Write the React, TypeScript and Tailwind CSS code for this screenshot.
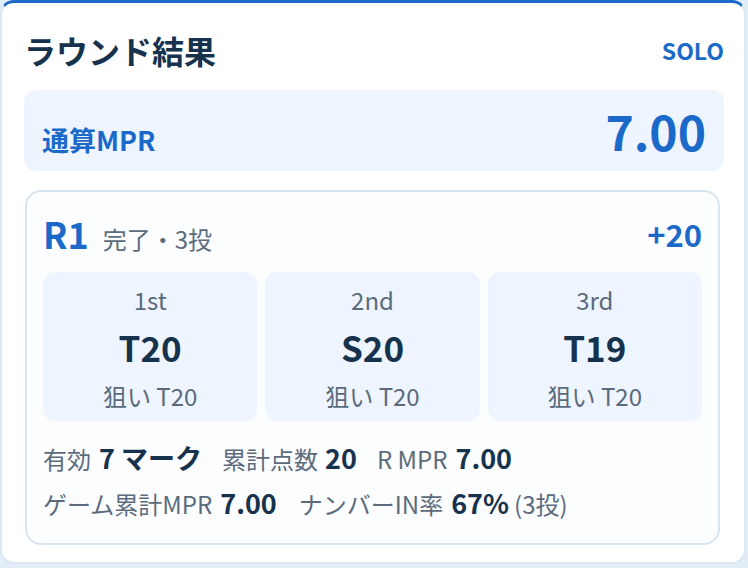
import React from "react";

const throws = [
    { label: "1st", hit: "T20", aim: "狙い T20" },
    { label: "2nd", hit: "S20", aim: "狙い T20" },
    { label: "3rd", hit: "T19", aim: "狙い T20" },
];

const App = () => {
    return (
        <div
            className="w-[748px] h-[568px] bg-[#e3edf7] pr-[2px] pb-[4px]"
            style={{ fontFamily: '"Noto Sans CJK JP", "Noto Sans", sans-serif' }}
        >
            <div className="h-full bg-white rounded-[14px] border-x-2 border-b-2 border-t-[3px] border-x-[#dbe7f3] border-b-[#dbe7f3] border-t-[#1b6ac9] pl-[22px] pr-[20px] pt-[25px]">
                {/* Header */}
                <div className="flex items-center justify-between h-[44px]">
                    <h1 className="text-[32px] font-bold text-[#17324d] leading-none">ラウンド結果</h1>
                    <span className="text-[23px] font-bold text-[#1b6ac9] leading-none">SOLO</span>
                </div>

                {/* Total MPR */}
                <div className="mt-[18px] h-[81px] bg-[#eef5fe] rounded-[12px] flex items-baseline justify-between pl-[18px] pr-[18px] pt-[16px]">
                    <span className="text-[27px] font-bold text-[#1b6ac9] leading-none">通算MPR</span>
                    <span className="text-[48px] font-bold text-[#1b6ac9] leading-none">7.00</span>
                </div>

                {/* Round card */}
                <div className="mt-[19px] ml-[1px] mr-[4px] h-[355px] bg-[#fbfdff] border-2 border-[#d8e4ef] rounded-[16px] px-[16px] pt-[20px]">
                    <div className="flex items-center justify-between h-[42px]">
                        <div className="flex items-baseline gap-[14px]">
                            <span className="text-[36px] font-bold text-[#1b6ac9] leading-none">R1</span>
                            <span className="text-[24px] text-[#5b6b7c] leading-none">完了・3投</span>
                        </div>
                        <span className="text-[31px] font-bold text-[#1b6ac9] leading-none">+20</span>
                    </div>

                    <div className="mt-[18px] grid grid-cols-3 gap-[8px]">
                        {throws.map((t) => (
                            <div
                                key={t.label}
                                className="h-[149px] bg-[#eef5fe] rounded-[12px] flex flex-col items-center pt-[13px]"
                            >
                                <span className="text-[24px] text-[#5b6b7c] leading-[30px]">{t.label}</span>
                                <span className="mt-[12px] text-[35px] font-bold text-[#17324d] leading-[40px]">{t.hit}</span>
                                <span className="mt-[14px] text-[24px] text-[#5b6b7c] leading-[30px]">{t.aim}</span>
                            </div>
                        ))}
                    </div>

                    {/* Stats */}
                    <div className="mt-[22px] flex items-baseline text-[#5b6b7c] text-[24px] leading-[30px]">
                        <span>有効</span>
                        <span className="ml-[8px] text-[27px] font-bold text-[#17324d]">7 マーク</span>
                        <span className="ml-[20px]">累計点数</span>
                        <span className="ml-[7px] text-[27px] font-bold text-[#17324d]">20</span>
                        <span className="ml-[20px]">R MPR</span>
                        <span className="ml-[8px] text-[27px] font-bold text-[#17324d]">7.00</span>
                    </div>
                    <div className="mt-[14px] flex items-baseline text-[#5b6b7c] text-[24px] leading-[30px]">
                        <span>ゲーム累計MPR</span>
                        <span className="ml-[8px] text-[27px] font-bold text-[#17324d]">7.00</span>
                        <span className="ml-[22px]">ナンバーIN率</span>
                        <span className="ml-[8px] text-[27px] font-bold text-[#17324d]">67%</span>
                        <span className="ml-[5px]">(3投)</span>
                    </div>
                </div>
            </div>
        </div>
    );
};

export default App;
